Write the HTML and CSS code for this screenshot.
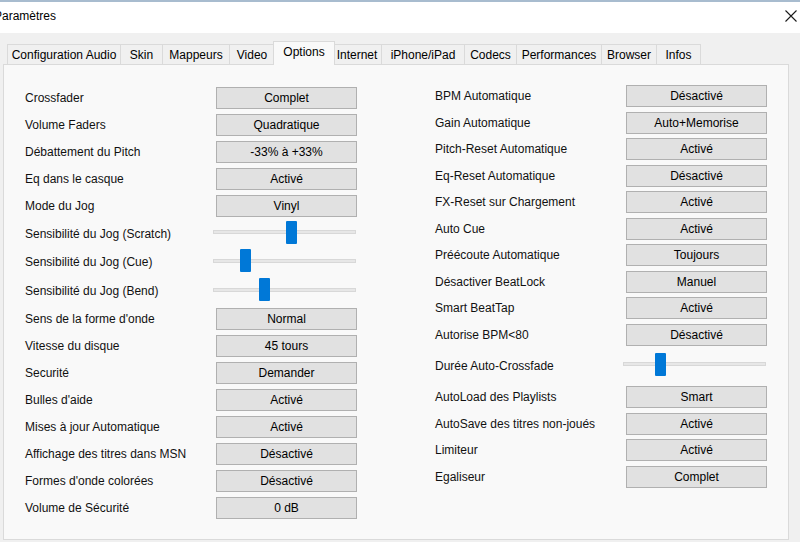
FILE: index.html
```html
<!DOCTYPE html>
<html lang="fr">
<head>
<meta charset="utf-8">
<title>Paramètres</title>
<link rel="stylesheet" href="styles.css">
</head>
<body>
<div class="window">
  <header class="titlebar">
    <span class="title">Paramètres</span>
    <svg class="close" width="12" height="12" viewBox="0 0 12 12" aria-label="Fermer">
      <path d="M0.5 0.5 L11.5 11.5 M11.5 0.5 L0.5 11.5" stroke="#1a1a1a" stroke-width="1.1" fill="none"/>
    </svg>
  </header>
  <div class="dialog">
    <nav class="tabs">
      <span class="tab">Configuration Audio</span>
      <span class="tab">Skin</span>
      <span class="tab">Mappeurs</span>
      <span class="tab">Video</span>
      <span class="tab tab-active">Options</span>
      <span class="tab">Internet</span>
      <span class="tab">iPhone/iPad</span>
      <span class="tab">Codecs</span>
      <span class="tab">Performances</span>
      <span class="tab">Browser</span>
      <span class="tab">Infos</span>
    </nav>
    <section class="panel">
      <div class="col col-left">
        <div class="row"><span class="label">Crossfader</span><button class="btn">Complet</button></div>
        <div class="row"><span class="label">Volume Faders</span><button class="btn">Quadratique</button></div>
        <div class="row"><span class="label">Débattement du Pitch</span><button class="btn">-33% à +33%</button></div>
        <div class="row"><span class="label">Eq dans le casque</span><button class="btn">Activé</button></div>
        <div class="row"><span class="label">Mode du Jog</span><button class="btn">Vinyl</button></div>
        <div class="row slider-row"><span class="label">Sensibilité du Jog (Scratch)</span><div class="slider"><span class="thumb" style="left:72px"></span></div></div>
        <div class="row slider-row"><span class="label">Sensibilité du Jog (Cue)</span><div class="slider"><span class="thumb" style="left:26px"></span></div></div>
        <div class="row slider-row"><span class="label">Sensibilité du Jog (Bend)</span><div class="slider"><span class="thumb" style="left:45px"></span></div></div>
        <div class="row"><span class="label">Sens de la forme d'onde</span><button class="btn">Normal</button></div>
        <div class="row"><span class="label">Vitesse du disque</span><button class="btn">45 tours</button></div>
        <div class="row"><span class="label">Securité</span><button class="btn">Demander</button></div>
        <div class="row"><span class="label">Bulles d'aide</span><button class="btn">Activé</button></div>
        <div class="row"><span class="label">Mises à jour Automatique</span><button class="btn">Activé</button></div>
        <div class="row"><span class="label">Affichage des titres dans MSN</span><button class="btn">Désactivé</button></div>
        <div class="row"><span class="label">Formes d'onde colorées</span><button class="btn">Désactivé</button></div>
        <div class="row"><span class="label">Volume de Sécurité</span><button class="btn">0 dB</button></div>
      </div>
      <div class="col col-right">
        <div class="row"><span class="label">BPM Automatique</span><button class="btn">Désactivé</button></div>
        <div class="row"><span class="label">Gain Automatique</span><button class="btn">Auto+Memorise</button></div>
        <div class="row"><span class="label">Pitch-Reset Automatique</span><button class="btn">Activé</button></div>
        <div class="row"><span class="label">Eq-Reset Automatique</span><button class="btn">Désactivé</button></div>
        <div class="row"><span class="label">FX-Reset sur Chargement</span><button class="btn">Activé</button></div>
        <div class="row"><span class="label">Auto Cue</span><button class="btn">Activé</button></div>
        <div class="row"><span class="label">Préécoute Automatique</span><button class="btn">Toujours</button></div>
        <div class="row"><span class="label">Désactiver BeatLock</span><button class="btn">Manuel</button></div>
        <div class="row"><span class="label">Smart BeatTap</span><button class="btn">Activé</button></div>
        <div class="row"><span class="label">Autorise BPM&lt;80</span><button class="btn">Désactivé</button></div>
        <div class="row slider-row"><span class="label">Durée Auto-Crossfade</span><div class="slider"><span class="thumb" style="left:31px"></span></div></div>
        <div class="row"><span class="label">AutoLoad des Playlists</span><button class="btn">Smart</button></div>
        <div class="row"><span class="label">AutoSave des titres non-joués</span><button class="btn">Activé</button></div>
        <div class="row"><span class="label">Limiteur</span><button class="btn">Activé</button></div>
        <div class="row"><span class="label">Egaliseur</span><button class="btn">Complet</button></div>
      </div>
    </section>
  </div>
</div>
</body>
</html>
```

FILE: styles.css
```css
* { box-sizing: border-box; }

html, body {
  margin: 0;
  padding: 0;
  width: 800px;
  height: 542px;
  overflow: hidden;
  background: #f0f0f0;
  font-family: "Liberation Sans", Arial, sans-serif;
  font-size: 12px;
  color: #000;
}

.window {
  width: 800px;
  height: 542px;
}

.titlebar {
  height: 33px;
  border-top: 2px solid #a8bccf;
  background: #fff;
  display: flex;
  align-items: center;
  justify-content: space-between;
  padding-bottom: 3px;
}

.title {
  margin-left: -6px;
  font-size: 12px;
  color: #000;
}

.close {
  margin-right: 3px;
  display: block;
}

.dialog {
  background: #f0f0f0;
  height: 509px;
  padding-top: 8px;
}

.tabs {
  display: grid;
  grid-template-columns: 114px 42px 67px 45px 58px 49px 83px 52px 85px 55px 44px;
  align-items: end;
  height: 23px;
  margin-left: 7px;
}

.tab {
  height: 20px;
  line-height: 21px;
  text-align: center;
  white-space: nowrap;
  border: 1px solid #dadada;
  border-bottom: none;
  background: #f0f0f0;
  margin-left: -1px;
}

.tab:first-child {
  margin-left: 0;
}

.tab-active {
  position: relative;
  z-index: 1;
  height: 24px;
  line-height: 21px;
  margin-bottom: -1px;
  margin-left: -2px;
  margin-right: -2px;
  background: #f9f9f9;
}

.panel {
  margin-left: 3px;
  width: 786px;
  height: 476px;
  border: 1px solid #dadada;
  background: #f9f9f9;
  display: flex;
  gap: 78px;
  padding-left: 21px;
}

.col {
  width: 332px;
  display: flex;
  flex-direction: column;
}

.col-left { padding-top: 19.5px; }
.col-right { padding-top: 17.75px; }

.row {
  display: grid;
  grid-template-columns: 191px 141px;
  align-items: center;
  height: 27px;
  flex: none;
}

.col-right .row { height: 26.5px; }

.col-left .slider-row { height: 28.67px; }
.col-right .slider-row { height: 36px; }

.label {
  white-space: nowrap;
  color: #111;
}

.btn {
  height: 22px;
  width: 141px;
  margin: 0;
  padding: 0;
  border: 1px solid #b0b0b0;
  background: #e1e1e1;
  font-family: inherit;
  font-size: 12px;
  color: #000;
  text-align: center;
}

.slider {
  position: relative;
  height: 4px;
  width: 143px;
  margin-left: -3px;
  margin-bottom: 3px;
  background: #e7e7e7;
  border: 1px solid #d8d8d8;
}

.thumb {
  position: absolute;
  top: 50%;
  margin-top: -11.5px;
  width: 11px;
  height: 23px;
  background: #0078d7;
  border-radius: 1px;
}
```
